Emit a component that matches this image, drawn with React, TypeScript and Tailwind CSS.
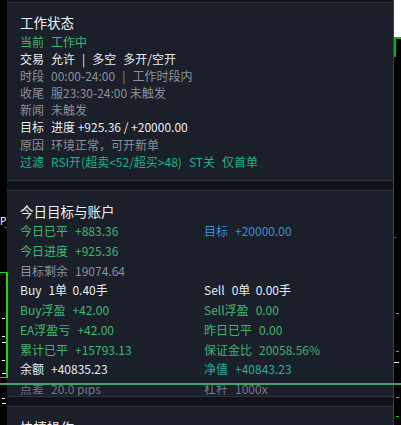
import React from 'react';

type Cell = { label: string; value: string; tone: string };

const statusRows: { parts: { text: string; tone: string }[] }[] = [
  { parts: [{ text: '当前', tone: 'text-[#41b96c]' }, { text: '工作中', tone: 'text-[#41b96c]' }] },
  {
    parts: [
      { text: '交易', tone: 'text-[#e9ebee]' },
      { text: '允许', tone: 'text-[#e9ebee]' },
      { text: '|', tone: 'text-[#e9ebee]' },
      { text: '多空', tone: 'text-[#e9ebee]' },
      { text: '多开/空开', tone: 'text-[#e9ebee]' },
    ],
  },
  {
    parts: [
      { text: '时段', tone: 'text-[#8a919b]' },
      { text: '00:00-24:00', tone: 'text-[#8a919b]' },
      { text: '|', tone: 'text-[#8a919b]' },
      { text: '工作时段内', tone: 'text-[#8a919b]' },
    ],
  },
  { parts: [{ text: '收尾', tone: 'text-[#8a919b]' }, { text: '服23:30-24:00 未触发', tone: 'text-[#8a919b]' }] },
  { parts: [{ text: '新闻', tone: 'text-[#8a919b]' }, { text: '未触发', tone: 'text-[#8a919b]' }] },
  { parts: [{ text: '目标', tone: 'text-[#e9ebee]' }, { text: '进度 +925.36 / +20000.00', tone: 'text-[#e9ebee]' }] },
  { parts: [{ text: '原因', tone: 'text-[#8a919b]' }, { text: '环境正常，可开新单', tone: 'text-[#8a919b]' }] },
  {
    parts: [
      { text: '过滤', tone: 'text-[#1fb38a]' },
      { text: 'RSI开(超卖<52/超买>48)', tone: 'text-[#1fb38a]' },
      { text: 'ST关', tone: 'text-[#1fb38a]' },
      { text: '仅首单', tone: 'text-[#1fb38a]' },
    ],
  },
];

const accountRows: [Cell, Cell | null][] = [
  [{ label: '今日已平', value: '+883.36', tone: 'text-[#41b96c]' }, { label: '目标', value: '+20000.00', tone: 'text-[#3a8fd8]' }],
  [{ label: '今日进度', value: '+925.36', tone: 'text-[#41b96c]' }, null],
  [{ label: '目标剩余', value: '19074.64', tone: 'text-[#8a919b]' }, null],
  [{ label: 'Buy', value: '1单  0.40手', tone: 'text-[#e9ebee]' }, { label: 'Sell', value: '0单  0.00手', tone: 'text-[#e9ebee]' }],
  [{ label: 'Buy浮盈', value: '+42.00', tone: 'text-[#41b96c]' }, { label: 'Sell浮盈', value: '0.00', tone: 'text-[#41b96c]' }],
  [{ label: 'EA浮盈亏', value: '+42.00', tone: 'text-[#41b96c]' }, { label: '昨日已平', value: '0.00', tone: 'text-[#41b96c]' }],
  [{ label: '累计已平', value: '+15793.13', tone: 'text-[#41b96c]' }, { label: '保证金比', value: '20058.56%', tone: 'text-[#3fae74]' }],
  [{ label: '余额', value: '+40835.23', tone: 'text-[#e9ebee]' }, { label: '净值', value: '+40843.23', tone: 'text-[#23b099]' }],
  [{ label: '点差', value: '20.0 pips', tone: 'text-[#737a85]' }, { label: '杠杆', value: '1000x', tone: 'text-[#737a85]' }],
];

function AccountCell({ cell }: { cell: Cell | null }) {
  if (!cell) return <div />;
  return (
    <div className={`flex gap-[7px] whitespace-pre ${cell.tone}`}>
      <span>{cell.label}</span>
      <span>{cell.value}</span>
    </div>
  );
}

export default function App() {
  return (
    <div className="relative w-[401px] h-[425px] overflow-hidden bg-black font-['Noto_Sans_CJK_SC','Noto_Sans',sans-serif] text-[12px]">
      <div className="flex h-full">
        {/* chart edge, left */}
        <div className="relative w-[7px] h-full bg-black">
          <span className="absolute top-[215px] -left-[6px] text-[10px] leading-[12px] text-white">TP</span>
          <div className="absolute top-[227px] left-[4px] w-[3px] h-px bg-[#e02020]" />
          <div className="absolute top-[272px] left-0 w-[8px] h-[106px] border-t border-r-2 border-b border-[#1ed31e]" />
          <div className="absolute top-[318px] left-[2px] w-[3px] h-px bg-white" />
          <div className="absolute top-[336px] left-[2px] w-[3px] h-px bg-white" />
          <div className="absolute top-[342px] left-[2px] w-[4px] h-px bg-white" />
          <div className="absolute top-[360px] left-[2px] w-[3px] h-px bg-white" />
          <div className="absolute top-[373px] left-[2px] w-[4px] h-px bg-white" />
          <div className="absolute top-[398px] left-[2px] w-[3px] h-px bg-white" />
          <div className="absolute top-[403px] left-[2px] w-[4px] h-px bg-white" />
        </div>

        {/* panel */}
        <div className="w-[387px] h-full bg-[#10141a] border-r border-[#3a414d] flex flex-col">
          <div className="h-[2px] shrink-0 bg-[#12161d]" />

          <div className="h-[179px] shrink-0 bg-[#1a1f29] border-y border-[#2c333e] pl-[13px] pt-[9px]">
            <div className="text-[13.5px] leading-[20px] text-[#eef0f3]">工作状态</div>
            <div className="flex flex-col mt-px">
              {statusRows.map((row, i) => (
                <div key={i} className="flex gap-[7px] leading-[17.1px] whitespace-pre">
                  {row.parts.map((p, j) => (
                    <span key={j} className={p.tone}>
                      {p.text}
                    </span>
                  ))}
                </div>
              ))}
            </div>
          </div>

          <div className="h-[9px] shrink-0" />

          <div className="h-[207px] shrink-0 overflow-hidden bg-[#1a1f29] border-y border-[#2c333e] pl-[13px] pt-[10px]">
            <div className="text-[13.5px] leading-[20px] text-[#eef0f3]">今日目标与账户</div>
            <div className="grid grid-cols-[184px_1fr]">
              {accountRows.map(([a, b], i) => (
                <React.Fragment key={i}>
                  <div className="leading-[19.75px]">
                    <AccountCell cell={a} />
                  </div>
                  <div className="leading-[19.75px]">
                    <AccountCell cell={b} />
                  </div>
                </React.Fragment>
              ))}
            </div>
          </div>

          <div className="h-[9px] shrink-0" />

          <div className="flex-1 bg-[#1a1f29] border-t border-[#2c333e] pl-[13px] pt-[10px]">
            <div className="text-[13.5px] leading-[20px] text-[#eef0f3]">快捷操作</div>
          </div>
        </div>

        {/* chart edge, right */}
        <div className="relative w-[7px] h-full bg-black">
          <div className="h-[37px] bg-white" />
          <div className="absolute top-[37px] left-0 w-full h-[2px] bg-[#13b313]" />
          <div className="absolute top-[37px] left-0 w-[2px] h-[20px] bg-[#13b313]" />
          <div className="absolute top-[237px] left-0 w-[2px] h-px bg-[#e02020]" />
          <div className="absolute top-[313px] left-[2px] w-[3px] h-px bg-[#1ed31e]" />
          <div className="absolute top-[351px] left-[2px] w-[3px] h-px bg-[#1ed31e]" />
          <div className="absolute top-[362px] left-0 w-[5px] h-px bg-white" />
          <div className="absolute top-[397px] left-[2px] w-[3px] h-px bg-[#1ed31e]" />
          <div className="absolute top-[416px] left-[2px] w-[3px] h-px bg-[#1ed31e]" />
        </div>
      </div>

      {/* chart price line drawn over the panel */}
      <div className="absolute top-[383px] left-0 w-full h-[2px] bg-[#3aa866]" />
    </div>
  );
}
